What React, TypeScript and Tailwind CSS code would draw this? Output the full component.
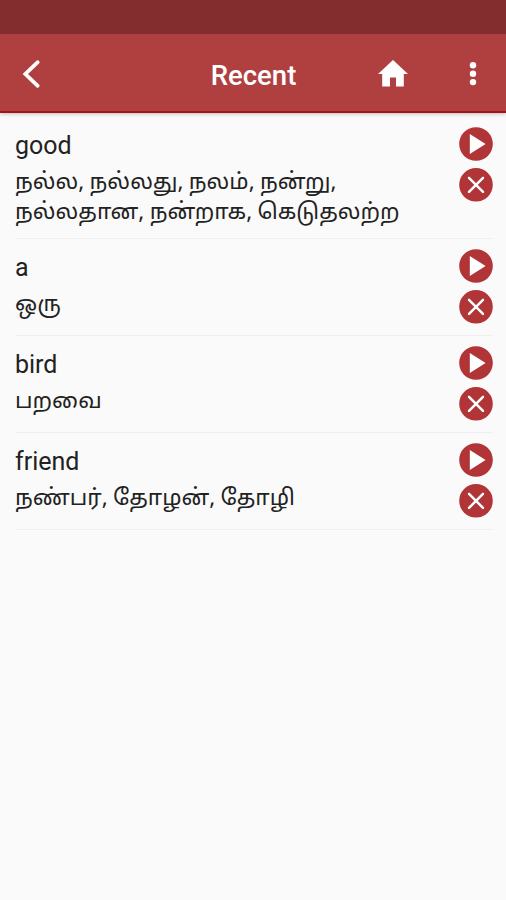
interface Entry {
  word: string;
  meaning: string[];
}

const entries: Entry[] = [
  { word: 'good', meaning: ['நல்ல, நல்லது, நலம், நன்று,', 'நல்லதான, நன்றாக, கெடுதலற்ற'] },
  { word: 'a', meaning: ['ஒரு'] },
  { word: 'bird', meaning: ['பறவை'] },
  { word: 'friend', meaning: ['நண்பர், தோழன், தோழி'] },
];

function AppBar() {
  return (
    <header className="shadow-[0_1px_4px_rgba(0,0,0,0.25)]">
      <div className="h-[34px] bg-[#832d2e]" />
      <div className="grid h-[79px] grid-cols-[1fr_auto_1fr] items-center border-b-2 border-[#a31318] bg-[#b04040] pr-[21px] pl-[22px] pt-0.5 text-white">
        <button aria-label="Back" className="w-5">
          <svg viewBox="0 0 20 30" className="h-[30px] w-5" fill="none" stroke="currentColor" strokeWidth="3.8">
            <path d="M15.7 3.2 3.4 15l12.3 11.8" strokeLinecap="round" />
          </svg>
        </button>
        <h1 className="pt-[5px] text-[27.5px] font-medium">Recent</h1>
        <div className="flex items-center justify-end">
          <button aria-label="Home" className="mr-[61px]">
            <svg viewBox="0 0 30 27" className="h-[27px] w-[30px]" fill="currentColor">
              <path d="M12 26.5V17.5h6v9h7.8V14H30L15 0 0 14h4.2v12.5z" />
            </svg>
          </button>
          <button aria-label="More" className="mr-2">
            <svg viewBox="0 0 8 24" className="h-6 w-2" fill="currentColor">
              <circle cx="4" cy="3.3" r="3.2" />
              <circle cx="4" cy="11.7" r="3.2" />
              <circle cx="4" cy="20.1" r="3.2" />
            </svg>
          </button>
        </div>
      </div>
    </header>
  );
}

function EntryRow({ word, meaning }: Entry) {
  return (
    <li className="flex min-h-[97px] justify-between border-b border-[#eeeeee] pt-2.5">
      <div>
        <p className="h-[37px] pt-1 text-[25px] leading-[30px]">{word}</p>
        <p className="pt-0.5 font-['Noto_Sans','Noto_Sans_Tamil',sans-serif] text-[22.5px] leading-[30px] [word-spacing:-0.6px]">
          {meaning.map((line) => (
            <span key={line} className="block whitespace-nowrap">
              {line}
            </span>
          ))}
        </p>
      </div>
      <div className="flex flex-col gap-[7px]">
        <button aria-label="Play">
          <svg viewBox="0 0 34 34" className="size-[34px]">
            <circle cx="17" cy="17" r="16.8" fill="#b13436" />
            <path d="M10.8 7.1v19.8L26.6 17z" fill="#fff" />
          </svg>
        </button>
        <button aria-label="Remove">
          <svg viewBox="0 0 34 34" className="size-[34px]">
            <circle cx="17" cy="16.8" r="16.8" fill="#b13436" />
            <path d="m10 9.8 14 14m0-14-14 14" stroke="#fff" strokeWidth="2.5" strokeLinecap="round" />
          </svg>
        </button>
      </div>
    </li>
  );
}

export default function App() {
  return (
    <div className="h-[900px] w-[506px] overflow-hidden bg-[#fafafa] font-[Roboto,'Noto_Sans_Tamil','Noto_Sans',sans-serif] text-[#222222]">
      <AppBar />
      <ul className="mt-1 pr-[13px] pl-[15px] [&>li:first-child]:min-h-[122px]">
        {entries.map((entry) => (
          <EntryRow key={entry.word} {...entry} />
        ))}
      </ul>
    </div>
  );
}
